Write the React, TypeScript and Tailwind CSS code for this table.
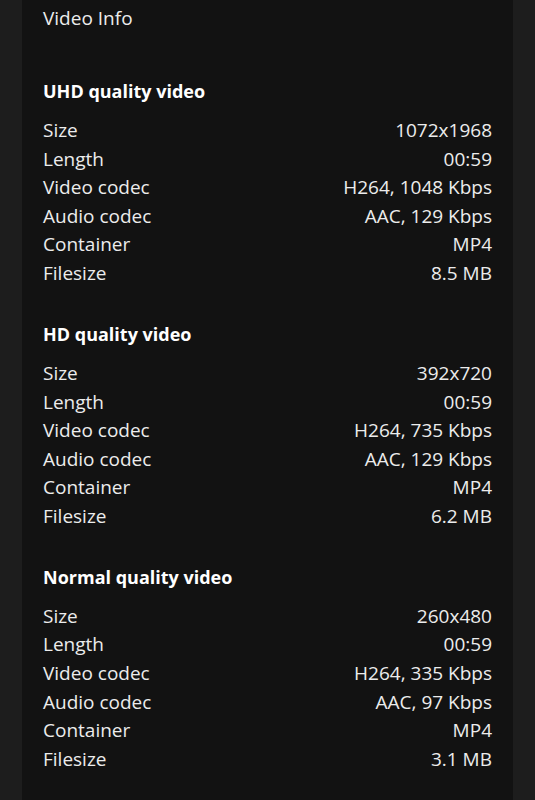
import React from "react";

type Row = [string, string];
const sections: { title: string; rows: Row[] }[] = [
  {
    title: "UHD quality video",
    rows: [
      ["Size", "1072x1968"],
      ["Length", "00:59"],
      ["Video codec", "H264, 1048 Kbps"],
      ["Audio codec", "AAC, 129 Kbps"],
      ["Container", "MP4"],
      ["Filesize", "8.5 MB"],
    ],
  },
  {
    title: "HD quality video",
    rows: [
      ["Size", "392x720"],
      ["Length", "00:59"],
      ["Video codec", "H264, 735 Kbps"],
      ["Audio codec", "AAC, 129 Kbps"],
      ["Container", "MP4"],
      ["Filesize", "6.2 MB"],
    ],
  },
  {
    title: "Normal quality video",
    rows: [
      ["Size", "260x480"],
      ["Length", "00:59"],
      ["Video codec", "H264, 335 Kbps"],
      ["Audio codec", "AAC, 97 Kbps"],
      ["Container", "MP4"],
      ["Filesize", "3.1 MB"],
    ],
  },
];

export default function App() {
  return (
    <div
      className="w-[535px] h-[800px] overflow-hidden bg-[#1d1d1d] flex justify-start pl-[22px]"
      style={{ fontFamily: '"Open Sans", "Noto Sans", sans-serif' }}
    >
      <div className="w-[491px] h-full bg-[#121212] px-[21px] pt-[4px] text-[#ececec] text-[19px]">
        <div className="leading-[28.6px] mb-[44.4px]">Video Info</div>
        <div className="flex flex-col gap-[32.4px]">
          {sections.map((s) => (
            <div key={s.title}>
              <div className="leading-[28.6px] text-[18px] font-bold text-white mb-[10.4px]">{s.title}</div>
              {s.rows.map(([k, v]) => (
                <div key={k} className="flex justify-between leading-[28.6px]">
                  <span>{k}</span>
                  <span>{v}</span>
                </div>
              ))}
            </div>
          ))}
        </div>
      </div>
    </div>
  );
}
